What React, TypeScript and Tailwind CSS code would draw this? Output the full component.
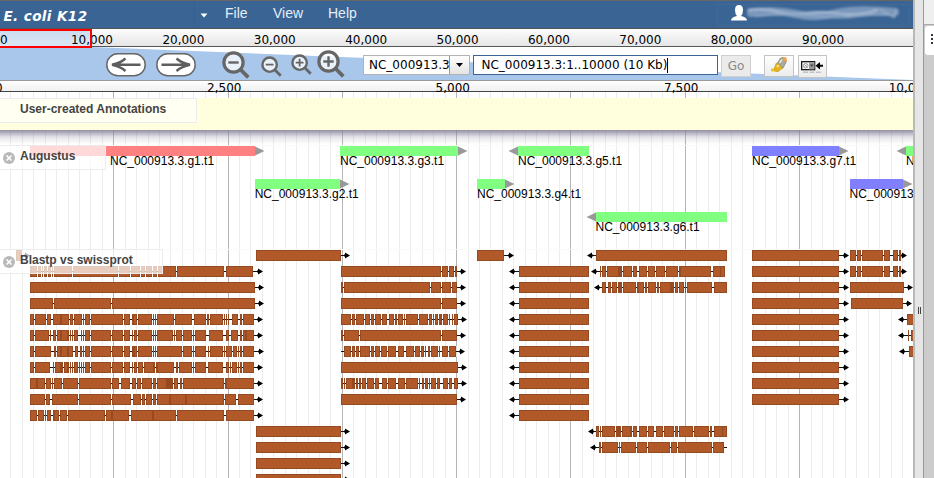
import React from "react";

type Strand = "+" | "-";

interface Hit {
  y: number;
  tip: number;
  strand: Strand;
  blocks: [number, number][];
  overlaps: [number, number][];
  lineTo?: number;
}

interface Gene {
  x1: number;
  x2: number;
  y: number;
  color: string;
  strand: Strand;
  name: string;
  labelX: number;
}

// Block lists are written in thirds of a pixel, relative to a column origin.
const parse = (origin: number, s: string): [number, number][] =>
  s
    .split(" ")
    .filter(Boolean)
    .map((p) => {
      const [a, b] = p.split("-").map(Number);
      return [origin + Math.round(a / 3), origin + Math.round(b / 3)];
    });

const hit = (
  origin: number,
  y: number,
  strand: Strand,
  tip: number,
  blocks: string,
  overlaps = "",
  lineTo?: number,
): Hit => ({
  y,
  strand,
  tip: origin + tip / 3,
  blocks: parse(origin, blocks),
  overlaps: parse(origin, overlaps),
  lineTo,
});

const rows = (from: number, to: number) => {
  const out: number[] = [];
  for (let y = from; y <= to; y += 16) out.push(y);
  return out;
};

const hits: Hit[] = [
  hit(0, 250, "+", 90, "48-66"),
  hit(0, 266, "+", 788, "90-111 114-123 126-130 133-141 144-153 156-160 163-216 219-354 357-390 393-420 423-435 438-456 459-471 474-528 531-672 678-760"),
  hit(0, 282, "+", 791, "90-765"),
  hit(0, 298, "+", 791, "90-159 162-333 336-765"),
  hit(0, 314, "+", 788, "90-102 105-138 141-153 159-207 210-219 222-246 249-252 255-270 273-369 372-390 396-411 414-456 459-462 465-468 471-522 525-576 582-618 621-627 630-669 672-675 678-681 684-687 696-714 720-726 729-762", "180-186 396-402 621-627 696-699"),
  hit(0, 330, "+", 788, "90-102 105-147 150-153 159-168 171-207 210-213 216-219 222-234 243-246 249-252 255-270 273-333 336-369 372-390 396-399 402-411 414-456 459-462 465-468 471-519 522-525 528-546 549-576 579-582 585-618 627-669 678-687 693-714 720-726 729-762", "180-186 201-207 735-741 693-696"),
  hit(0, 346, "+", 791, "90-102 105-153 162-168 171-219 225-234 240-246 249-252 255-270 273-333 336-369 372-390 396-411 414-456 459-462 465-468 471-546 549-576 579-582 585-618 624-627 630-669 672-675 678-696 699-711 714-717 720-726 729-762", "180-186 201-207 396-405"),
  hit(0, 362, "+", 788, "90-102 105-150 159-162 165-189 192-207 210-213 216-219 222-234 237-240 243-246 249-252 255-270 273-333 336-369 372-390 396-399 402-411 414-429 432-465 468-471 471-522 528-534 537-576 579-582 585-618 624-669 678-687 690-693 696-711 714-717 720-726 729-762", "180-189 201-207 459-465"),
  hit(0, 378, "+", 788, "90-135 138-153 156-159 162-186 189-234 237-333 336-357 363-390 396-408 411-423 426-456 459-468 471-519 522-534 540-546 549-672 675-762", "108-114 237-240 498-519 675-681"),
  hit(0, 394, "+", 788, "90-135 138-150 156-234 237-333 336-393 399-423 426-435 438-456 459-468 471-672 675-708 714-762", "237-240 507-513 555-561"),
  hit(0, 410, "+", 788, "90-111 114-132 135-138 141-153 159-177 180-201 204-315 318-387 393-528 531-672 678-762", "159-165 333-339 456-462"),

  ...[250, 426, 442, 458, 474].map((y) => hit(240, y, "+", 329, "48-303")),

  hit(240, 266, "+", 677, "303-603 606-624 627-642 645-651"),
  hit(240, 282, "+", 677, "303-309 312-570 573-603 606-633 636-651"),
  hit(240, 298, "+", 677, "303-603 606-651"),
  hit(240, 314, "+", 680, "303-333 336-345 348-372 375-390 393-402 405-423 426-441 447-462 465-471 474-489 492-495 498-534 537-564 567-576 579-582 585-594 597-606 609-624 627-630 636-639 642-654", "330-333 465-471 597-606 621-624"),
  hit(240, 330, "+", 677, "303-309 312-357 360-603 606-651"),
  hit(240, 346, "+", 674, "312-333 336-345 348-357 360-390 393-402 405-420 423-441 444-468 474-492 498-522 525-540 543-552 555-558 564-570 573-594 597-600 606-624 627-648", "621-624", 341),
  hit(240, 362, "+", 680, "303-654"),
  hit(240, 378, "+", 680, "303-309 312-315 318-345 348-354 357-363 366-378 381-402 405-417 426-441 444-468 474-495 498-534 537-540 546-552 555-564 567-570 573-588 591-600 609-624 627-636 642-654", "336-345"),
  hit(240, 394, "+", 677, "303-651"),

  hit(240, 250, "+", 821, "711-792"),

  ...rows(266, 410).map((y) => hit(500, y, "-", 28, "57-267")),

  hit(500, 250, "-", 262, "288-681"),
  hit(500, 266, "-", 274, "300-303 306-318 321-366 369-396 399-411 417-441 444-465 468-495 498-534 537-633 639-675", "354-366 537-543 660-663"),
  hit(500, 282, "-", 281, "306-318 324-333 336-351 354-366 369-408 411-432 435-441 444-468 471-477 480-522 525-534 537-552 555-558 561-636 642-681", "354-366 411-417 510-522"),
  hit(500, 426, "-", 265, "288-297 300-303 306-345 348-363 366-396 399-411 417-441 444-462 468-489 492-522 525-534 537-579 582-627 630-636 642-681", "348-360 390-396 666-669"),
  hit(500, 442, "-", 271, "297-303 306-354 357-360 363-408 411-441 444-510 513-531 534-636 639-672", "", 727),

  ...rows(250, 394).map((y) => hit(734, y, "+", 344, "54-315")),

  hit(734, 250, "+", 520, "348-366 369-381 384-447 450-468 477-492 495-501"),
  hit(734, 266, "+", 520, "348-366 369-381 384-447 450-468 477-492 495-501"),
  hit(734, 282, "+", 536, "348-510"),
  hit(734, 298, "+", 533, "351-507"),
  hit(734, 314, "-", 493, "519-546"),
  hit(734, 330, "-", 493, "522-525 531-546"),
  hit(734, 346, "-", 496, "525-546"),
];

const genes: Gene[] = [
  { x1: 30, x2: 255, y: 146, color: "#ff8080", strand: "+", name: "NC_000913.3.g1.t1", labelX: 110 },
  { x1: 255, x2: 340, y: 179, color: "#80ff80", strand: "+", name: "NC_000913.3.g2.t1", labelX: 254.7 },
  { x1: 340, x2: 458, y: 146, color: "#80ff80", strand: "+", name: "NC_000913.3.g3.t1", labelX: 340 },
  { x1: 477, x2: 505, y: 179, color: "#80ff80", strand: "+", name: "NC_000913.3.g4.t1", labelX: 477 },
  { x1: 518, x2: 589, y: 146, color: "#80ff80", strand: "-", name: "NC_000913.3.g5.t1", labelX: 518 },
  { x1: 596, x2: 727, y: 212, color: "#80ff80", strand: "-", name: "NC_000913.3.g6.t1", labelX: 595.5 },
  { x1: 752, x2: 839, y: 146, color: "#8080ff", strand: "+", name: "NC_000913.3.g7.t1", labelX: 752 },
  { x1: 850, x2: 903, y: 179, color: "#8080ff", strand: "+", name: "NC_000913.3.g8.t1", labelX: 849.5 },
  { x1: 906, x2: 930, y: 146, color: "#80ff80", strand: "-", name: "NC_000913.3.g9.t1", labelX: 906 },
];

function HitGlyph({ h }: { h: Hit }) {
  const start = h.blocks[0][0];
  const end = h.blocks[h.blocks.length - 1][1];
  const mid = h.y + 5;
  const plus = h.strand === "+";
  const t = Math.round(h.tip);
  const from = plus ? Math.min(h.lineTo ?? start, start) : t + 2;
  const to = plus ? t - 2 : Math.max(h.lineTo ?? end, end);
  return (
    <g shapeRendering="crispEdges">
      <rect x={start - 1} y={h.y} width={end - start + 2} height={11} fill="#fff" opacity={0.6} />
      <rect x={from} y={mid} width={to - from} height={1} fill="#111" />
      {h.blocks.map(([a, b], i) => {
        const w = Math.max(1, b - a);
        return (
          <React.Fragment key={i}>
            <rect x={a} y={h.y} width={w} height={11} fill="#964a22" />
            {w > 2 && <rect x={a + 1} y={h.y + 1} width={w - 2} height={9} fill="#b15928" />}
          </React.Fragment>
        );
      })}
      {h.overlaps.map(([a, b], i) => (
        <rect key={i} x={a} y={h.y} width={b - a} height={11} fill="#964a22" />
      ))}
      <path
        shapeRendering="auto"
        fill="#000"
        d={plus ? `M${t} ${mid + 0.5}l-5 -3v2h-1v2h1v2z` : `M${t} ${mid + 0.5}l5 -3v2h1v2h-1v2z`}
      />
    </g>
  );
}

function GeneGlyph({ g }: { g: Gene }) {
  return (
    <g>
      <rect x={g.x1} y={g.y} width={g.x2 - g.x1} height={10} fill={g.color} />
      {g.strand === "+" ? (
        <path d={`M${g.x2} ${g.y + 0.5}l9.5 4.5l-9.5 4.5z`} fill="#999" />
      ) : (
        <path d={`M${g.x1} ${g.y + 0.5}l-9.5 4.5l9.5 4.5z`} fill="#999" />
      )}
      <text x={g.labelX} y={g.y + 19} fontSize="12" fill="#000">
        {g.name}
      </text>
    </g>
  );
}

function CloseIcon() {
  return (
    <svg className="h-3 w-3" viewBox="0 0 12 12">
      <circle cx="6" cy="6" r="6" fill="#b9b9b9" />
      <path d="M3.5 3.5l5 5M8.5 3.5l-5 5" stroke="#fff" strokeWidth="1.6" />
    </svg>
  );
}

function Magnifier({ size, plus, className }: { size: number; plus?: boolean; className: string }) {
  return (
    <svg width={size} height={size} viewBox="0 0 28 28" className={`shrink-0 ${className}`}>
      <path d="M18 18L26.3 26.3" stroke="#666" strokeWidth="3.8" />
      <circle cx="11.5" cy="11.5" r="9.6" fill="#fff" fillOpacity="0.75" stroke="#666" strokeWidth="3.2" />
      <path d={plus ? "M6.3 11.5H16.7M11.5 6.3V16.7" : "M6.3 11.5H16.7"} stroke="#666" strokeWidth="2.4" />
    </svg>
  );
}

function PanButton({ right, className }: { right?: boolean; className: string }) {
  return (
    <svg width="40" height="24" viewBox="0 0 40 24" className={`shrink-0 ${className}`}>
      <rect x="0.8" y="0.8" width="38.4" height="22" rx="11" fill="#fff" stroke="#666" strokeWidth="1.5" />
      <path
        d={
          right
            ? "M5.5 11.8H33M20.5 5.5Q26 10.3 34 11.8Q26 13.3 20.5 18"
            : "M34.5 11.8H7M19.5 5.5Q14 10.3 6 11.8Q14 13.3 19.5 18"
        }
        fill="none"
        stroke="#5e5e5e"
        strokeWidth="2.5"
      />
    </svg>
  );
}

function TrackLabel({ text, className }: { text: string; className: string }) {
  return (
    <div
      className={`absolute left-0 flex h-[25px] items-start border border-l-0 border-[#ececec] bg-white/70 pl-[3px] text-[12px] leading-[14px] font-bold text-[#444] ${className}`}
    >
      <span className="mt-[6px] mr-[5px]">
        <CloseIcon />
      </span>
      <span className="mt-[3px] whitespace-nowrap">{text}</span>
    </div>
  );
}

const overviewLabels = ["10,000", "20,000", "30,000", "40,000", "50,000", "60,000", "70,000", "80,000", "90,000"];
const scaleLabels = ["2,500", "5,000", "7,500"];

export default function App() {
  return (
    <div className="flex h-[478px] w-[934px] overflow-hidden bg-white font-['Liberation_Sans',Arial,sans-serif]">
      <main className="flex w-[913px] shrink-0 flex-col overflow-hidden">
        <header className="flex h-[29px] shrink-0 items-start border-t border-b border-t-[#666] border-b-[#555] bg-[#396494] text-[14px] leading-4 text-[#e6eef8]">
          <div className="flex h-[27px] w-[195px] items-center border-r border-[#35608f] pt-[3px] pl-[3.5px] font-['DejaVu_Sans',sans-serif] text-[13.5px] font-bold tracking-[0.4px] text-white italic">
            E. coli K12
          </div>
          <svg width="8" height="5" className="mt-[12px] ml-[5px]" viewBox="0 0 8 5">
            <path d="M0.5 0.5H7.5L4 4.5Z" fill="#fff" />
          </svg>
          <nav className="mt-1 ml-[17px] flex">
            <span className="w-[48px]">File</span>
            <span className="w-[55px]">View</span>
            <span>Help</span>
          </nav>
          <div className="mt-[3px] ml-auto mr-[3px] flex h-[22px] w-[193px] border border-[#426893] pl-[13px]">
            <svg width="170" height="20" viewBox="0 0 170 20">
              <path d="M0 15.5Q0 12 6 11Q4 9 4 5Q4 0 8 0Q12 0 12 5Q12 9 10 11Q16 12 16 15.5Z" fill="#fff" />
              <g fill="none" strokeLinecap="round" className="blur-[1px]">
                <path d="M20 8Q45 4 65 9T105 8Q125 3 164 7" stroke="#7996bb" strokeWidth="8" />
                <path d="M18 5Q35 3 48 7Q62 11 78 8Q95 6 110 9Q130 11 146 5" stroke="#9fb4cf" strokeWidth="3" />
                <path d="M24 11Q60 8 84 11T128 11Q145 9 158 10" stroke="#8ba6c6" strokeWidth="2" />
                <path d="M150 5L163 12L165 5" stroke="#93a9c7" strokeWidth="2" />
              </g>
            </svg>
          </div>
        </header>

        <div className="relative h-[18px] shrink-0 border-b border-[#555] bg-linear-to-b from-[#fcfcfc] to-[#e6e6e6]">
          <div className="absolute top-0 left-0 z-0 h-[18px] w-[90px] bg-linear-to-b from-[#c9dcf2] to-[#dce7f3]" />
          <div className="relative flex font-['DejaVu_Sans',sans-serif] text-[12px] leading-[14px]">
            <span className="mt-[4px] w-[46.3px] shrink-0">0</span>
            {overviewLabels.map((l) => (
              <span key={l} className="mt-[4px] w-[91.4px] shrink-0 text-center">
                {l}
              </span>
            ))}
          </div>
          <div className="absolute top-0 -left-[2px] z-10 h-[19px] w-[94px] border-2 border-[#f00]" />
        </div>

        <div className="relative flex h-[33px] shrink-0 items-start bg-white">
          <svg className="absolute inset-0" width="913" height="33">
            <path d="M0 0H92L913 33H0Z" fill="#a9c6eb" />
          </svg>
          <div className="relative flex items-start">
            <PanButton className="mt-[6px] ml-[106px]" />
            <PanButton right className="mt-[6px] ml-[10px]" />
            <Magnifier size={28} className="mt-[4px] ml-[26px]" />
            <Magnifier size={21} className="mt-[9px] ml-[11px]" />
            <Magnifier size={21} plus className="mt-[7px] ml-[9px]" />
            <Magnifier size={28} plus className="mt-[3px] ml-[5px]" />
            <div className="mt-[8px] ml-[18px] flex h-5 w-[107px] border border-[#b3b3b3] bg-white font-['DejaVu_Sans',sans-serif] text-[12px] leading-[19px]">
              <span className="w-[85px] overflow-hidden pl-[5px] whitespace-nowrap">NC_000913.3</span>
              <span className="flex grow items-center justify-center border-l border-[#999] bg-linear-to-b from-white to-[#e4e4e4]">
                <svg width="7" height="4" viewBox="0 0 7 4">
                  <path d="M0 0H7L3.5 4Z" fill="#000" />
                </svg>
              </span>
            </div>
            <div className="mt-[8px] ml-[3px] flex h-5 w-[245px] border border-[#396494] bg-white pl-[7.5px] font-['DejaVu_Sans',sans-serif] text-[12px] leading-[19px] whitespace-pre">
              NC_000913.3:1..10000 (10 Kb)
              <span className="mt-[2px] -ml-[0.5px] h-[15px] w-px bg-black" />
            </div>
            <div className="mt-[8px] ml-[3px] h-[22px] w-[30px] border border-[#d0d0d0] bg-[#ebebeb] text-center font-['DejaVu_Sans',sans-serif] text-[12px] leading-[20px] text-[#888]">
              Go
            </div>
            <div className="mt-[8px] ml-[13px] flex h-[22px] w-[30px] justify-center border border-[#c4c4c4] bg-linear-to-b from-white to-[#ececec]">
              <svg width="18" height="18" viewBox="0 0 18 18">
                <path d="M1 12.5H5L9 15.5H1Z" fill="#f0c818" />
                <path d="M4 13.5L6 7.5L10 7L13 12L8 15.5Q5 16 4 13.5Z" fill="#e6b422" stroke="#c39a30" strokeWidth="0.7" />
                <path d="M7 11L9 9" stroke="#fff0a0" strokeWidth="1.6" />
                <path d="M7.5 7L10.5 2L14 1.5L16.5 5.5L13 12Z" fill="#a8ab98" stroke="#85887a" strokeWidth="0.8" />
                <path d="M12 1L16.5 1.5L17 6L14.5 5Z" fill="#f0a050" />
                <path d="M9.5 7L12 3.5" stroke="#e8e8dc" strokeWidth="1.5" />
              </svg>
            </div>
            <div className="mt-[8px] ml-[4px] flex h-[23px] w-[29px] justify-center border border-[#c4c4c4] bg-linear-to-b from-white to-[#ececec]">
              <svg width="23" height="20" viewBox="0 0 23 20">
                <rect x="0.7" y="5.7" width="13" height="8" fill="#fff" stroke="#000" strokeWidth="1.2" />
                <rect x="8" y="6" width="5.5" height="7.4" fill="#999" />
                <circle cx="4.7" cy="9.7" r="2.3" fill="none" stroke="#888" strokeWidth="0.8" />
                <path d="M3.3 8.3l2.8 2.8M6.1 8.3l-2.8 2.8" stroke="#888" strokeWidth="0.7" />
                <path d="M9 8.5h3.6l-1.8 2.5z" fill="#444" />
                <path d="M14.5 9.7L19 6V8.7H22V10.7H19V13.5Z" fill="#000" />
                <path d="M2 16.2H21" stroke="#c4c4c4" strokeWidth="1.6" strokeDasharray="5 1.5" />
              </svg>
            </div>
          </div>
        </div>

        <div className="relative z-10 h-[12px] shrink-0 border-t border-b border-t-[#999] border-b-[#444] bg-linear-to-b from-white to-[#f0f0f0]">
          <div className="-ml-[5px] flex w-[950px] font-['DejaVu_Sans',sans-serif] text-[12px] leading-[14px]">
            <span className="w-[115px] shrink-0">0</span>
            {scaleLabels.map((l) => (
              <span key={l} className="w-[228.5px] shrink-0 text-center">
                {l}
              </span>
            ))}
            <span className="pl-[93.2px]">10,000</span>
          </div>
        </div>

        <section className="relative h-[386px] shrink-0 overflow-hidden bg-white">
          <svg className="absolute top-0 left-0" width="913" height="386" viewBox="0 92 913 386">
            <g shapeRendering="crispEdges">
              {Array.from({ length: 79 }, (_, i) => i + 1).map((k) => (
                <rect
                  key={k}
                  x={Math.round((k * 114.3) / 10 - 1.001)}
                  y={92}
                  width={1}
                  height={386}
                  fill={k % 10 === 0 ? "#b5b5b5" : "#ececec"}
                />
              ))}
              <rect x="0" y="145" width="913" height="1" fill="#fafafa" />
              <rect x="0" y="249" width="913" height="1" fill="#fafafa" />
            </g>
            {hits.map((h, i) => (
              <HitGlyph key={i} h={h} />
            ))}
            {genes.map((g) => (
              <GeneGlyph key={g.name} g={g} />
            ))}
          </svg>
          <div className="relative mt-[6px] h-[32px] bg-[#ffffdd]">
            <div className="flex h-[25px] w-[197px] items-start border border-l-0 border-[#ececec] bg-[#fffff2] pt-[3px] pl-5 text-[12px] leading-[14px] font-bold whitespace-nowrap text-[#444]">
              User-created Annotations
            </div>
          </div>
          <div className="relative h-[14px] bg-linear-to-b from-[#77758c]/80 via-[#a5a3b5]/30 to-transparent" />
          <TrackLabel text="Augustus" className="top-[53px] w-[106px]" />
          <TrackLabel text="Blastp vs swissprot" className="top-[157px] w-[163px]" />
        </section>
      </main>

      <div className="flex w-[11px] shrink-0 justify-center border-r border-l-2 border-r-[#999] border-l-[#b9b9b9] bg-[#e6e6e6]">
        <div className="mt-[307px] flex h-[7px] gap-px">
          <span className="w-px bg-[#444]" />
          <span className="w-px bg-[#444]" />
        </div>
      </div>
      <aside className="flex grow flex-col bg-[#cccccc]">
        <div className="h-[25px] border-b border-[#aaa] bg-[#efefef]" />
        <div className="mt-px ml-px flex h-[29px] flex-col items-end justify-center gap-[2px] rounded-l-[3px] bg-white pt-0 pr-px pb-[3px]">
          <span className="h-[2px] w-[2px] bg-[#334]" />
          <span className="h-[2px] w-[2px] bg-[#334]" />
          <span className="h-[2px] w-[2px] bg-[#334]" />
        </div>
      </aside>
    </div>
  );
}
